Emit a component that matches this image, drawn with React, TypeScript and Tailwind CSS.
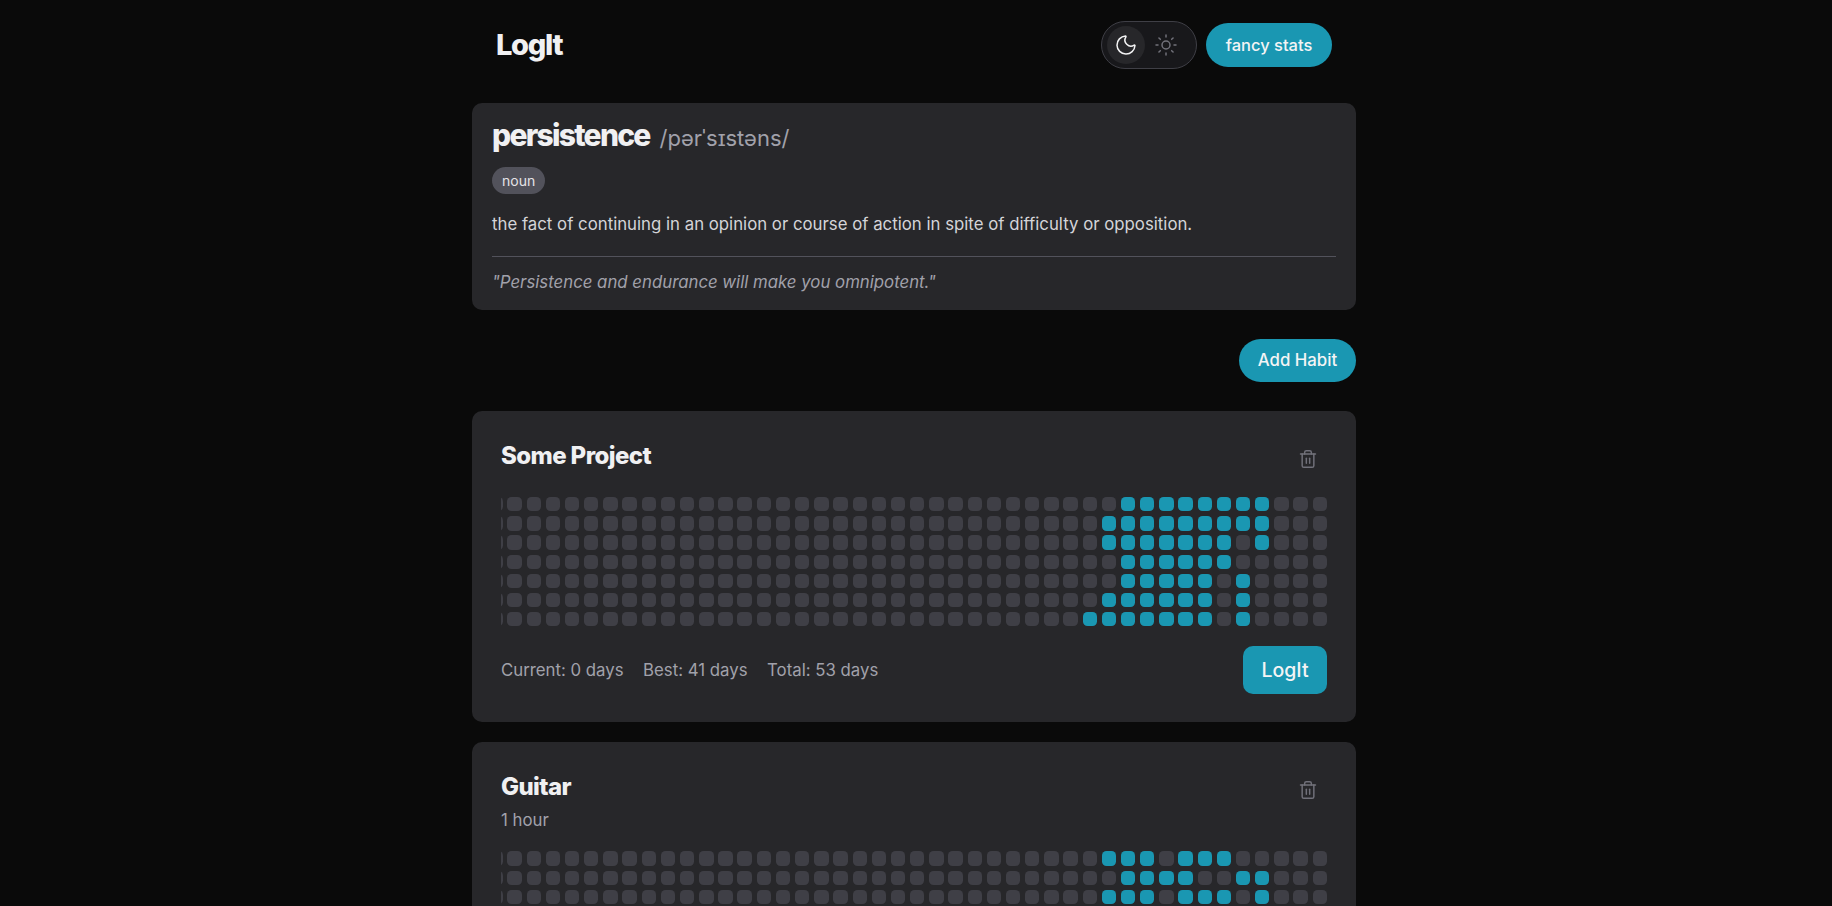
import { Moon, Sun, Trash2 } from "lucide-react";

const COLS = 44;

const someProject = [
  [33, 34, 35, 36, 37, 38, 39, 40],
  [32, 33, 34, 35, 36, 37, 38, 39, 40],
  [32, 33, 34, 35, 36, 37, 38, 40],
  [33, 34, 35, 36, 37, 38],
  [33, 34, 35, 36, 37, 39],
  [32, 33, 34, 35, 36, 37, 39],
  [31, 32, 33, 34, 35, 36, 37, 39],
];

const guitar = [
  [32, 33, 34, 36, 37, 38],
  [33, 34, 35, 36, 39, 40],
  [32, 33, 34, 36, 37, 38, 40],
  [],
  [],
  [],
  [],
];

function HabitGrid({ rows }: { rows: number[][] }) {
  const cells = [];
  for (let c = 0; c < COLS; c++) {
    for (let r = 0; r < 7; r++) {
      const on = rows[r].includes(c);
      cells.push(
        <div
          key={`${c}-${r}`}
          className={on ? "rounded-[4.5px] bg-[#1a97b2]" : "rounded-[4.5px] bg-[#3f3f46]"}
        />
      );
    }
  }
  return (
    <div className="grid grid-flow-col grid-rows-[repeat(7,14.39px)] auto-cols-[14.39px] gap-[4.8px] justify-end overflow-hidden">
      {cells}
    </div>
  );
}

function HabitCard({
  title,
  subtitle,
  rows,
}: {
  title: string;
  subtitle?: string;
  rows: number[][];
}) {
  return (
    <div className="rounded-[10px] bg-[#27272a] px-[29px] pt-[27px] pb-[28px]">
      <div className="flex items-start justify-between">
        <div>
          <h2 className="h-9 text-2xl leading-9 font-extrabold tracking-[-0.025em] text-[#f0f0f2]">{title}</h2>
          {subtitle && <p className="mt-[3px] text-[16.8px] leading-6 text-[#a1a1aa]">{subtitle}</p>}
        </div>
        <button className="mt-[11px] mr-[9px] text-[#71717a]">
          <Trash2 size={20} strokeWidth={1.75} />
        </button>
      </div>
      <div className={subtitle ? "mt-[19px]" : "mt-[23px]"}>
        <HabitGrid rows={rows} />
      </div>
      <div className="mt-[20px] flex items-center justify-between">
        <div className="flex gap-[19.5px] text-[16.8px] text-[#a1a1aa]">
          <span>Current: 0 days</span>
          <span>Best: 41 days</span>
          <span>Total: 53 days</span>
        </div>
        <button className="h-12 w-[84px] rounded-[10px] bg-[#1a97b2] text-[19.5px] font-medium text-[#f4f4f5]">
          LogIt
        </button>
      </div>
    </div>
  );
}

export default function App() {
  return (
    <div className="h-screen overflow-hidden bg-[#0a0a0a] pr-1 font-['Inter',sans-serif]">
      <div className="mx-auto w-[884px]">
        {/* Header */}
        <header className="flex items-center justify-between px-6 pt-[21px] pb-[34px]">
          <h1 className="text-[29px] font-extrabold tracking-[-0.045em] text-[#f0f0f2]">LogIt</h1>
          <div className="flex items-center gap-[9px]">
            <div className="flex h-12 w-24 items-center gap-[2px] rounded-full border border-[#3f3f46] bg-[#18181b] px-[5px]">
              <div className="flex h-[38px] w-[38px] items-center justify-center rounded-full bg-[#27272a] text-[#f4f4f5]">
                <Moon size={24} strokeWidth={1.5} />
              </div>
              <div className="flex h-[38px] w-[38px] items-center justify-center text-[#71717a]">
                <Sun size={24} strokeWidth={1.5} />
              </div>
            </div>
            <button className="h-11 w-[126px] rounded-full bg-[#1a97b2] text-[16.5px] font-medium text-[#f4f4f5]">
              fancy stats
            </button>
          </div>
        </header>

        {/* Word of the day */}
        <section className="rounded-[10px] bg-[#27272a] px-5 pt-[14px]">
          <div className="flex items-baseline gap-[10px]">
            <span className="text-3xl font-extrabold tracking-[-0.058em] text-[#f0f0f2]">persistence</span>
            <span className="text-[22px] text-[#a1a1aa]">/pərˈsɪstəns/</span>
          </div>
          <span className="mt-[12px] inline-block h-[27px] rounded-full bg-[#52525b] px-[10px] text-sm leading-[27px] text-[#e4e4e7]">
            noun
          </span>
          <p className="mt-[18px] text-[16.8px] leading-6 text-[#d4d4d8]">
            the fact of continuing in an opinion or course of action in spite of difficulty or opposition.
          </p>
          <div className="mt-[20px] border-t border-[#52525b] pt-[13px] pb-[16px]">
            <p className="text-[16.8px] leading-6 text-[#a1a1aa] italic">
              "Persistence and endurance will make you omnipotent."
            </p>
          </div>
        </section>

        <div className="mt-[29px] flex justify-end">
          <button className="h-[43px] w-[117px] rounded-full bg-[#1a97b2] text-[16.8px] font-medium text-[#f4f4f5]">
            Add Habit
          </button>
        </div>

        <div className="mt-[29px] flex flex-col gap-5">
          <HabitCard title="Some Project" rows={someProject} />
          <HabitCard title="Guitar" subtitle="1 hour" rows={guitar} />
        </div>
      </div>
    </div>
  );
}
